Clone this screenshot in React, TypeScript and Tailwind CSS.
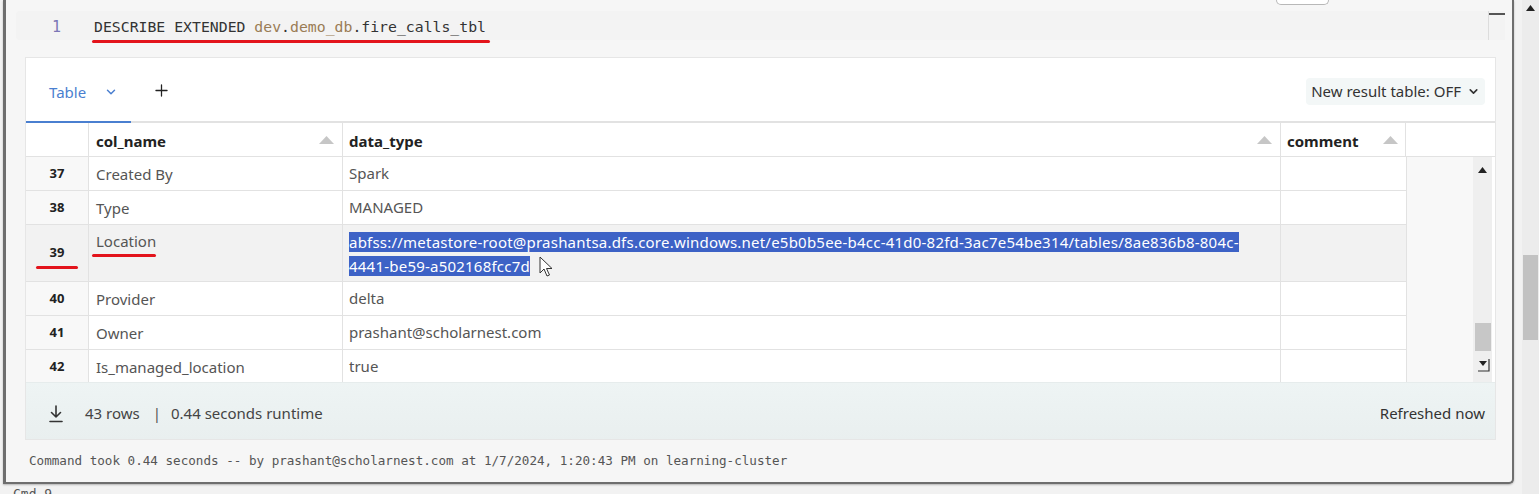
import React from "react";
import { ChevronDown, Plus } from "lucide-react";

function Tri() {
  return (
    <svg width="15" height="8" viewBox="0 0 15 8" className="shrink-0">
      <polygon points="7.5,0 15,8 0,8" fill="#c6c6c6" />
    </svg>
  );
}

function Cursor() {
  return (
    <svg width="14" height="22" viewBox="0 0 14 22" className="inline-block align-middle ml-[9px] -mt-[2px]">
      <path d="M1 1 L1 17 L5 13 L8 20 L10.5 19 L7.5 12.5 L13 12.5 Z" fill="#fff" stroke="#333" strokeWidth="1" strokeLinejoin="round" />
    </svg>
  );
}

const rows: { n: number; name: string; type: string }[] = [
  { n: 37, name: "Created By", type: "Spark" },
  { n: 38, name: "Type", type: "MANAGED" },
  { n: 39, name: "Location", type: "" },
  { n: 40, name: "Provider", type: "delta" },
  { n: 41, name: "Owner", type: "prashant@scholarnest.com" },
  { n: 42, name: "Is_managed_location", type: "true" },
];

export default function App() {
  return (
    <div className="w-[1539px] h-[494px] overflow-hidden bg-[#f2f2f2] flex font-['Noto_Sans',sans-serif]">
      <div className="w-[1522px] flex flex-col">
        {/* cell */}
        <div className="ml-[3px] w-[1511px] h-[484px] shrink-0 border-l-[3px] border-r-2 border-b-2 border-[#6e6e6e] rounded-br-[5px] bg-[#f6f6f6] flex flex-col shadow-[0_1px_2px_rgba(0,0,0,0.25)]">
          <div className="h-[11px] flex">
            <div className="ml-[1270px] w-[53px] h-[5px] border border-t-0 border-[#b8b8b8] rounded-b-[9px] bg-white" />
          </div>
          {/* editor */}
          <div className="ml-[10px] w-[1489px] h-[29px] bg-[#f3f3f3] rounded-l-[4px] flex items-center">
            <div className="w-[78px] pl-[36px] pt-[3px] text-[15px] text-[#7b76b6] font-['DejaVu_Sans_Mono',monospace]">1</div>
            <div className="pt-[3px] text-[14.8px] text-[#333] font-['DejaVu_Sans_Mono',monospace] whitespace-pre leading-[20px]">
              DESCRIBE EXTENDED <span className="text-[#9a7c55]">dev</span>.<span className="text-[#9a7c55]">demo_db</span>.fire_calls_tbl
            </div>
            <div className="ml-auto w-[17px] h-[29px] border-l border-[#dcdcdc] flex flex-col">
              <div className="mt-[2px] h-[2px] bg-[#555]" />
            </div>
          </div>
          <div className="ml-[86px] w-[398px] h-[3px] bg-[#e3141c] rounded-full" />
          {/* results panel */}
          <div className="mt-[14px] ml-[19px] w-[1471px] bg-white border border-[#e6e6e6] flex flex-col">
            {/* tab bar */}
            <div className="h-[65px] flex items-center border-b-2 border-[#e2e2e2] relative">
              <div className="w-[105px] h-[65px] flex items-center pl-[23px] border-b-2 border-[#4a7fd0] -mb-[2px] pt-[5px]">
                <span className="text-[15px] text-[#4a7fd0]">Table</span>
                <ChevronDown size={14} strokeWidth={2.5} className="ml-[18px] text-[#4a7fd0]" />
              </div>
              <Plus size={19} strokeWidth={1.6} className="ml-[21px] mt-[2px] text-[#222]" />
              <div className="ml-auto mr-[10px] mt-[4px] h-[27px] px-[5px] rounded-[4px] bg-[#f3f7f7] flex items-center text-[15px] text-[#333]">
                New result table: OFF
                <ChevronDown size={13} strokeWidth={3} className="ml-[6px] text-[#333]" />
              </div>
            </div>
            {/* header */}
            <div className="h-[34px] pt-[3px] flex border-b border-[#e2e2e2] text-[15px] font-bold text-[#222]">
              <div className="w-[63px] border-r border-[#e2e2e2] -mt-[3px]" />
              <div className="w-[254px] border-r border-[#e2e2e2] -mt-[3px] pt-[3px] flex items-center pl-[7px] pr-[8px]">
                <span>col_name</span>
                <div className="ml-auto -mt-[2px]"><Tri /></div>
              </div>
              <div className="w-[938px] border-r border-[#e2e2e2] -mt-[3px] pt-[3px] flex items-center pl-[6px] pr-[8px]">
                <span>data_type</span>
                <div className="ml-auto -mt-[2px]"><Tri /></div>
              </div>
              <div className="w-[125px] border-r border-[#e2e2e2] -mt-[3px] pt-[3px] flex items-center pl-[6px] pr-[7px]">
                <span>comment</span>
                <div className="ml-auto -mt-[2px]"><Tri /></div>
              </div>
              <div className="flex-1" />
            </div>
            {/* body */}
            <div className="flex h-[225px] overflow-hidden">
              <div className="w-[1380px] flex flex-col">
                {rows.map((r) => {
                  const sel = r.n === 39;
                  return (
                    <div
                      key={r.n}
                      className={
                        "flex shrink-0 border-b border-[#e2e2e2] text-[15px] text-[#555] " +
                        (sel ? "h-[57px] bg-[#f2f2f2]" : "h-[34px] bg-white")
                      }
                    >
                      <div className={"w-[63px] border-r border-[#e2e2e2] flex flex-col items-center justify-center text-[13px] font-bold text-[#222] " + (sel ? "bg-[#f2f2f2]" : "bg-[#f8f8f8]")}>
                        <span className={sel ? "mt-[6px]" : "mt-[1px]"}>{r.n}</span>
                        {sel && <div className="mt-[4px] w-[42px] h-[3px] bg-[#e3141c] rounded-full" />}
                      </div>
                      <div className={"w-[254px] border-r border-[#e2e2e2] pl-[7px] flex " + (sel ? "flex-col pt-[6px]" : "items-center")}>
                        <span className="leading-[20px]">{r.name}</span>
                        {sel && <div className="-ml-[4px] mt-[3px] w-[64px] h-[3px] bg-[#e3141c] rounded-full" />}
                      </div>
                      <div className={"w-[938px] border-r border-[#e2e2e2] pl-[6px] flex " + (sel ? "pt-[5px]" : "items-center")}>
                        {sel ? (
                          <div className="leading-[24px] text-[15px] text-white">
                            <span className="bg-[#3d62c6] tracking-[0.22px]">abfss://metastore-root@prashantsa.dfs.core.windows.net/e5b0b5ee-b4cc-41d0-82fd-3ac7e54be314/tables/8ae836b8-804c-</span>
                            <br />
                            <span className="bg-[#3d62c6] tracking-[0.22px]">4441-be59-a502168fcc7d</span>
                            <Cursor />
                          </div>
                        ) : (
                          <span>{r.type}</span>
                        )}
                      </div>
                      <div className="w-[125px]" />
                    </div>
                  );
                })}
              </div>
              <div className="w-[67px] bg-[#f8f8f8] border-l border-[#e2e2e2]" />
              <div className="w-[19px] bg-[#efefef] flex flex-col items-center">
                <svg width="9" height="6" viewBox="0 0 9 6" className="mt-[10px]">
                  <polygon points="4.5,0 9,6 0,6" fill="#222" />
                </svg>
                <div className="mt-[150px] w-[16px] h-[28px] bg-[#c7c7c7]" />
                <svg width="14" height="14" viewBox="0 0 14 14" className="mt-[7px]">
                  <polygon points="3,3 11,3 7,8" fill="#222" />
                  <path d="M13 1 V13 H2" stroke="#333" strokeWidth="1.2" fill="none" />
                </svg>
              </div>
              <div className="flex-1 bg-white" />
            </div>
            {/* footer */}
            <div className="h-[57px] pt-[5px] bg-[linear-gradient(#eef4f4,#e9efef)] flex items-center text-[15px] text-[#444] border-t border-[#e6ecec]">
              <svg width="16" height="20" viewBox="0 0 16 20" className="ml-[22px]">
                <path d="M8 2 V13 M3.5 8.5 L8 13 L12.5 8.5" stroke="#333" strokeWidth="1.6" fill="none" strokeLinecap="round" strokeLinejoin="round" />
                <path d="M2 17.5 H14" stroke="#333" strokeWidth="1.6" strokeLinecap="round" />
              </svg>
              <span className="ml-[21px]">43 rows</span>
              <span className="ml-[13px] text-[#555]">|</span>
              <span className="ml-[10px]">0.44 seconds runtime</span>
              <span className="ml-auto mr-[10px] text-[#333]">Refreshed now</span>
            </div>
          </div>
          <div className="mt-[13px] ml-[23px] text-[12.6px] leading-[16px] text-[#555] font-['DejaVu_Sans_Mono',monospace] whitespace-pre">
            Command took 0.44 seconds -- by prashant@scholarnest.com at 1/7/2024, 1:20:43 PM on learning-cluster
          </div>
        </div>
        <div className="ml-[13px] mt-[2px] text-[13px] leading-[16px] text-[#555] font-['DejaVu_Sans_Mono',monospace]">Cmd 9</div>
      </div>
      {/* page scrollbar */}
      <div className="w-[17px] bg-[#ececec] flex flex-col items-center">
        <svg width="9" height="6" viewBox="0 0 9 6" className="mt-[5px]">
          <polygon points="4.5,0 9,6 0,6" fill="#222" />
        </svg>
        <div className="mt-[244px] w-[15px] h-[85px] bg-[#c2c2c2]" />
      </div>
    </div>
  );
}
